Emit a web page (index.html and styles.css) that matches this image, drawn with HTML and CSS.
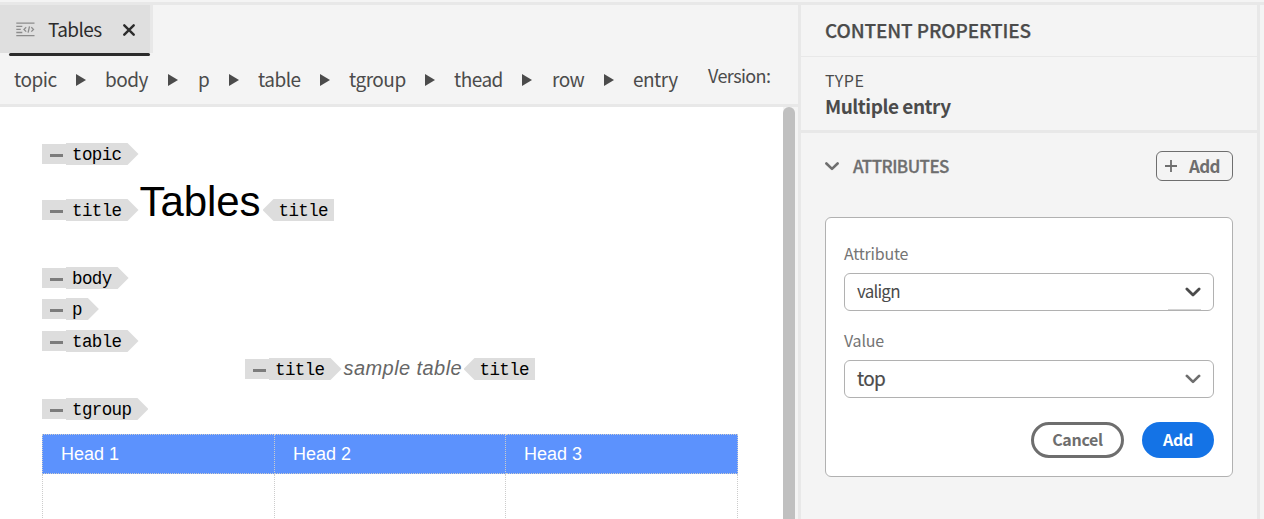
FILE: index.html
```html
<!DOCTYPE html>
<html lang="en">
<head>
<meta charset="utf-8">
<title>Tables</title>
<link rel="stylesheet" href="styles.css">
</head>
<body>
<div class="app">
  <main class="workspace">
    <div class="tabs">
      <div class="tab">
        <svg class="tab-icon" width="19" height="15" viewBox="0 0 19 15" fill="none" stroke="#8c8c8c" stroke-width="1.3"><path d="M.3 1.1h18.2M.3 4.3h6M.3 7.4h4.5M.3 10.5h6M.3 13.6h18.2"/><path d="M10.2 5.2 8 7.4l2.2 2.2M15.3 5.2l2.2 2.2-2.2 2.2M13.5 4.3l-1.4 6.3"/></svg>
        <span class="tab-name">Tables</span>
        <svg class="tab-close" width="12" height="12" viewBox="0 0 12 12" fill="none" stroke="#2c2c2c" stroke-width="2.4" stroke-linecap="round"><path d="m1.3 1.3 9.4 9.4M10.7 1.3 1.3 10.7"/></svg>
      </div>
    </div>
    <nav class="crumbs">
      <span>topic</span><i></i><span>body</span><i></i><span>p</span><i></i><span>table</span><i></i><span>tgroup</span><i></i><span>thead</span><i></i><span>row</span><i></i><span>entry</span>
      <span class="version">Version:</span>
    </nav>
    <div class="editor">
      <div class="document">
        <div class="line line-topic"><span class="fold"></span><span class="tag">topic</span></div>
        <div class="line line-title"><span class="fold"></span><span class="tag">title</span><h1>Tables</h1><span class="tag close">title</span></div>
        <div class="line line-body"><span class="fold"></span><span class="tag">body</span></div>
        <div class="line line-p"><span class="fold"></span><span class="tag">p</span></div>
        <div class="line line-table"><span class="fold"></span><span class="tag">table</span></div>
        <div class="line line-caption"><span class="fold"></span><span class="tag">title</span><em>sample table</em><span class="tag close">title</span></div>
        <div class="line line-tgroup"><span class="fold"></span><span class="tag">tgroup</span></div>
        <div class="grid">
          <div class="cell head">Head 1</div><div class="cell head">Head 2</div><div class="cell head">Head 3</div>
          <div class="cell"></div><div class="cell"></div><div class="cell"></div>
        </div>
      </div>
      <div class="scrollbar"><div class="thumb"></div></div>
    </div>
  </main>
  <aside class="properties">
    <h2>CONTENT PROPERTIES</h2>
    <section class="type">
      <div class="type-label">TYPE</div>
      <div class="type-value">Multiple entry</div>
    </section>
    <section class="attributes">
      <header>
        <svg class="chevron" width="14" height="9" viewBox="0 0 14 9" fill="none" stroke="#6e6e6e" stroke-width="2.6" stroke-linecap="round" stroke-linejoin="round"><path d="m1.4 1.5 5.6 5.4 5.6-5.4"/></svg>
        <h3>ATTRIBUTES</h3>
        <button class="add-attr"><svg width="12" height="12" viewBox="0 0 12 12" stroke="#6e6e6e" stroke-width="1.8"><path d="M6 0v12M0 6h12"/></svg><span>Add</span></button>
      </header>
      <div class="card">
        <label class="lbl-attribute">Attribute</label>
        <div class="select first"><span class="valign">valign</span><svg width="16" height="10" viewBox="0 0 16 10" fill="none" stroke="#4b4b4b" stroke-width="2.8" stroke-linecap="round" stroke-linejoin="round"><path d="m1.9 1.9 6.1 6 6.1-6"/></svg></div>
        <label class="lbl-value">Value</label>
        <div class="select"><span class="top">top</span><svg width="16" height="10" viewBox="0 0 16 10" fill="none" stroke="#6e6e6e" stroke-width="2.7" stroke-linecap="round" stroke-linejoin="round"><path d="m1.9 1.9 6.1 6 6.1-6"/></svg></div>
        <div class="actions"><button class="cancel">Cancel</button><button class="submit">Add</button></div>
      </div>
    </section>
  </aside>
</div>
</body>
</html>
```
FILE: styles.css
```css
* { box-sizing: border-box; }
body {
  margin: 0;
  height: 519px;
  overflow: hidden;
  background: #f4f4f4;
  color: #4b4b4b;
  font-family: "Noto Sans CJK SC", "Open Sans", sans-serif;
}
h1, h2, h3 { margin: 0; font-weight: normal; }
button { font-family: inherit; padding: 0; background: none; }
.app {
  display: grid;
  grid-template-columns: 798px 462px 1fr;
  margin-top: 2px;
  height: 517px;
  border-top: 3px solid #e8e8e8;
}
.workspace { display: flex; flex-direction: column; min-height: 0; }
.tabs { height: 51px; }
.tab {
  display: flex;
  align-items: center;
  width: 153px;
  height: 48px;
  background: #dfdfdf;
  border-right: 3px solid #e8e8e8;
  padding-left: 16px;
  position: relative;
}
.tab::after {
  content: "";
  position: absolute;
  left: 9px;
  right: 0;
  bottom: -3px;
  height: 3px;
  border-radius: 1.5px;
  background: #2c2c2c;
}
.tab-name { width: 75px; margin: -1px 0 0 13px; font-size: 19px; letter-spacing: -0.6px; line-height: 28px; color: #2c2c2c; }
.tab-close { margin-top: 1px; }
.crumbs {
  display: grid;
  grid-template-columns: 62px 29px 63px 30px 31px 29px 62px 29px 76px 29px 68px 30px 52px 29px 75px 1fr;
  align-items: center;
  height: 51px;
  padding-left: 14px;
  border-bottom: 3px solid #e8e8e8;
  font-size: 19px;
  letter-spacing: -0.5px;
  line-height: 28px;
}
.crumbs span { margin-top: -3px; }
.crumbs i { width: 10px; height: 12px; background: #4b4b4b; clip-path: polygon(0 0, 100% 50%, 0 100%); }
.crumbs .version { font-size: 18px; letter-spacing: -0.6px; margin-top: -10px; }
.editor { display: flex; flex: 1; min-height: 0; }
.document {
  width: 783px;
  padding: 36px 0 0 42px;
  background: #fff;
  overflow: hidden;
  font-family: "Liberation Sans", Arial, sans-serif;
}
.scrollbar { width: 15px; padding-right: 3px; }
.thumb { height: 100%; border-radius: 6px 6px 0 0; background: #c0c0c0; }
.line { display: flex; height: 22px; line-height: 22px; }
.line-title { margin-top: 34px; }
.line-body { margin-top: 46px; }
.line-p { margin-top: 9px; }
.line-table { margin-top: 10px; }
.line-caption { margin: 6px 0 0 203px; }
.line-tgroup { margin-top: 18px; }
.fold { width: 24px; height: 20px; margin-top: 1px; padding: 10px 3px 0 8px; background: #ddd; }
.fold::before { content: ""; display: block; height: 3px; background: #7c7c7c; }
.tag {
  height: 22px;
  padding: 0 17px 0 6px;
  background: #ddd;
  clip-path: polygon(0 0, calc(100% - 11px) 0, 100% 50%, calc(100% - 11px) 100%, 0 100%);
  color: #000;
  font: 17.5px/25px "Liberation Mono", monospace;
  letter-spacing: -0.6px;
}
.tag.close { padding: 0 6px 0 16px; clip-path: polygon(11px 0, 100% 0, 100% 100%, 11px 100%, 0 50%); }
h1 { width: 124px; padding-left: 1px; font-size: 42px; letter-spacing: -0.1px; line-height: 22px; margin-top: -8px; color: #000; }
em { width: 122px; padding-left: 2px; margin-top: -1px; font-size: 20px; letter-spacing: 0.43px; color: #666; white-space: nowrap; }
.grid {
  display: grid;
  grid-template-columns: 233px 231px 232px;
  grid-template-rows: 40px 60px;
  width: 696px;
  margin-top: 14px;
}
.cell { border-right: 1px dotted #ccc; }
.cell:nth-child(3n + 1) { border-left: 1px dotted #ccc; }
.head {
  padding-left: 18px;
  background: #5c92fd;
  border-top: 1px dotted #ccc;
  border-bottom: 1px dotted #ccc;
  color: #fff;
  font-size: 18px;
  line-height: 38px;
}
.properties { border: solid #e8e8e8; border-width: 0 3px; }
h2 { height: 52px; padding-left: 24px; border-bottom: 1px solid #e8e8e8; font-size: 19px; line-height: 50px; font-weight: 500; letter-spacing: -0.12px; -webkit-text-stroke: 0.25px #4b4b4b; }
.type { height: 76px; padding: 11px 0 0 24px; border-bottom: 3px solid #e8e8e8; }
.type-label { font-size: 16px; line-height: 24px; letter-spacing: 0.5px; }
.type-value { font-size: 19px; line-height: 28px; font-weight: 600; letter-spacing: -0.48px; }
.attributes header { display: flex; align-items: center; height: 66px; padding: 0 24px; }
h3 { margin: -1px 0 0 14px; font-size: 17px; line-height: 26px; font-weight: 500; letter-spacing: -0.55px; color: #6e6e6e; -webkit-text-stroke: 0.3px #6e6e6e; }
.add-attr {
  display: flex;
  align-items: center;
  width: 77px;
  height: 30px;
  margin-left: auto;
  padding-left: 8px;
  border: 1px solid #6e6e6e;
  border-radius: 6px;
  color: #6e6e6e;
  font-size: 17px;
  font-weight: 600;
  letter-spacing: -0.7px;
}
.add-attr span { margin: -1px 0 0 12px; line-height: 26px; }
.card { width: 408px; height: 260px; margin: 18px 0 0 24px; padding: 22px 18px 0; background: #fff; border: 1px solid #b1b1b1; border-radius: 6px; }
.card label { display: block; height: 26px; margin-bottom: 7px; font-size: 16px; line-height: 26px; letter-spacing: -0.2px; color: #747474; }
.select {
  display: flex;
  align-items: center;
  justify-content: space-between;
  height: 38px;
  margin-bottom: 16px;
  padding: 0 12px;
  border: 1px solid #b1b1b1;
  border-radius: 6px;
}
.select.first { background: linear-gradient(#d4d4d4, #d4d4d4) 323px 35px / 33px 1px no-repeat; }
.select span { margin-top: -2px; font-size: 17px; line-height: 26px; letter-spacing: -0.8px; }
.select .top { font-size: 19px; letter-spacing: -0.7px; -webkit-text-stroke: 0.2px #4b4b4b; }
.actions { display: flex; justify-content: flex-end; gap: 18px; margin-top: 24px; }
.actions button { height: 36px; padding-bottom: 2px; border-radius: 18px; font-size: 16px; font-weight: 600; letter-spacing: -0.3px; line-height: 26px; }
.actions .cancel { width: 93px; border: 3px solid #6e6e6e; color: #6e6e6e; }
.actions .submit { width: 72px; border: 0; background: #1473e6; color: #fff; }
```
